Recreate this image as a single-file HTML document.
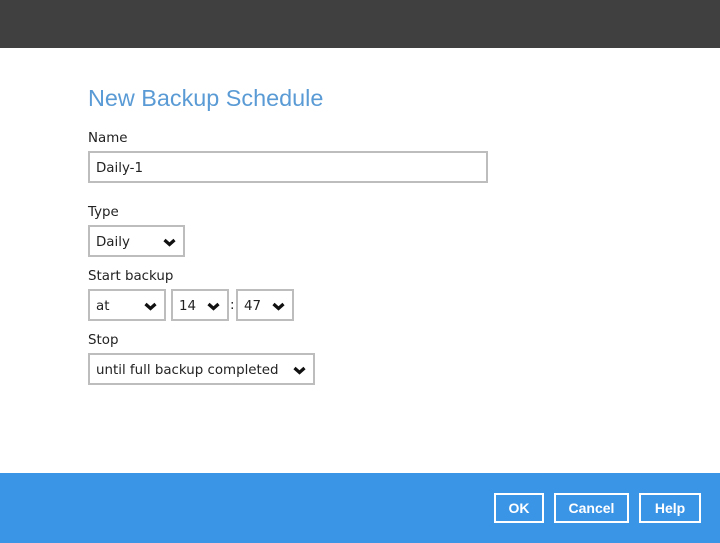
<html><head><style>
body{margin:0;width:720px;height:543px;background:#fff;font-family:"DejaVu Sans",sans-serif;position:relative;overflow:hidden}
.top{position:absolute;left:0;top:0;width:720px;height:48px;background:#404040}
.foot{position:absolute;left:0;top:473px;width:720px;height:70px;background:#3b95e7}
.t{position:absolute;left:88px;top:85px;font-size:23.4px;color:#5a9bd5;font-family:"Liberation Sans",sans-serif}
.l{position:absolute;left:88px;font-size:13.4px;color:#222}
.b{position:absolute;box-sizing:border-box;border:2px solid #bdbdbd;height:32px;font-size:13.4px;color:#222;padding:8px 0 0 6px;background:#fff}
.b svg{position:absolute;right:7px;top:11px}
.btn{position:absolute;top:493px;height:30px;box-sizing:border-box;border:2px solid #fff;color:#fff;font-size:14px;font-weight:bold;text-align:center;line-height:26px;font-family:"Liberation Sans",sans-serif}
</style></head><body>
<div class="top"></div>
<div class="t">New Backup Schedule</div>
<div class="l" style="top:131px">Name</div>
<div class="b" style="left:88px;top:151px;width:400px">Daily-1</div>
<div class="l" style="top:205px">Type</div>
<div class="b" style="left:88px;top:225px;width:97px">Daily<svg width="13" height="9"><polyline points="1.5,2 6.5,6.5 11.5,2" fill="none" stroke="#111" stroke-width="3.2"/></svg></div>
<div class="l" style="top:269px">Start backup</div>
<div class="b" style="left:88px;top:289px;width:78px">at<svg width="13" height="9"><polyline points="1.5,2 6.5,6.5 11.5,2" fill="none" stroke="#111" stroke-width="3.2"/></svg></div>
<div class="b" style="left:171px;top:289px;width:58px">14<svg width="13" height="9"><polyline points="1.5,2 6.5,6.5 11.5,2" fill="none" stroke="#111" stroke-width="3.2"/></svg></div>
<div class="l" style="top:298px;left:230px">:</div>
<div class="b" style="left:236px;top:289px;width:58px">47<svg width="13" height="9"><polyline points="1.5,2 6.5,6.5 11.5,2" fill="none" stroke="#111" stroke-width="3.2"/></svg></div>
<div class="l" style="top:333px">Stop</div>
<div class="b" style="left:88px;top:353px;width:227px">until full backup completed<svg width="13" height="9"><polyline points="1.5,2 6.5,6.5 11.5,2" fill="none" stroke="#111" stroke-width="3.2"/></svg></div>
<div class="foot"></div>
<div class="btn" style="left:494px;width:50px">OK</div>
<div class="btn" style="left:554px;width:75px">Cancel</div>
<div class="btn" style="left:639px;width:62px">Help</div>
</body></html>
